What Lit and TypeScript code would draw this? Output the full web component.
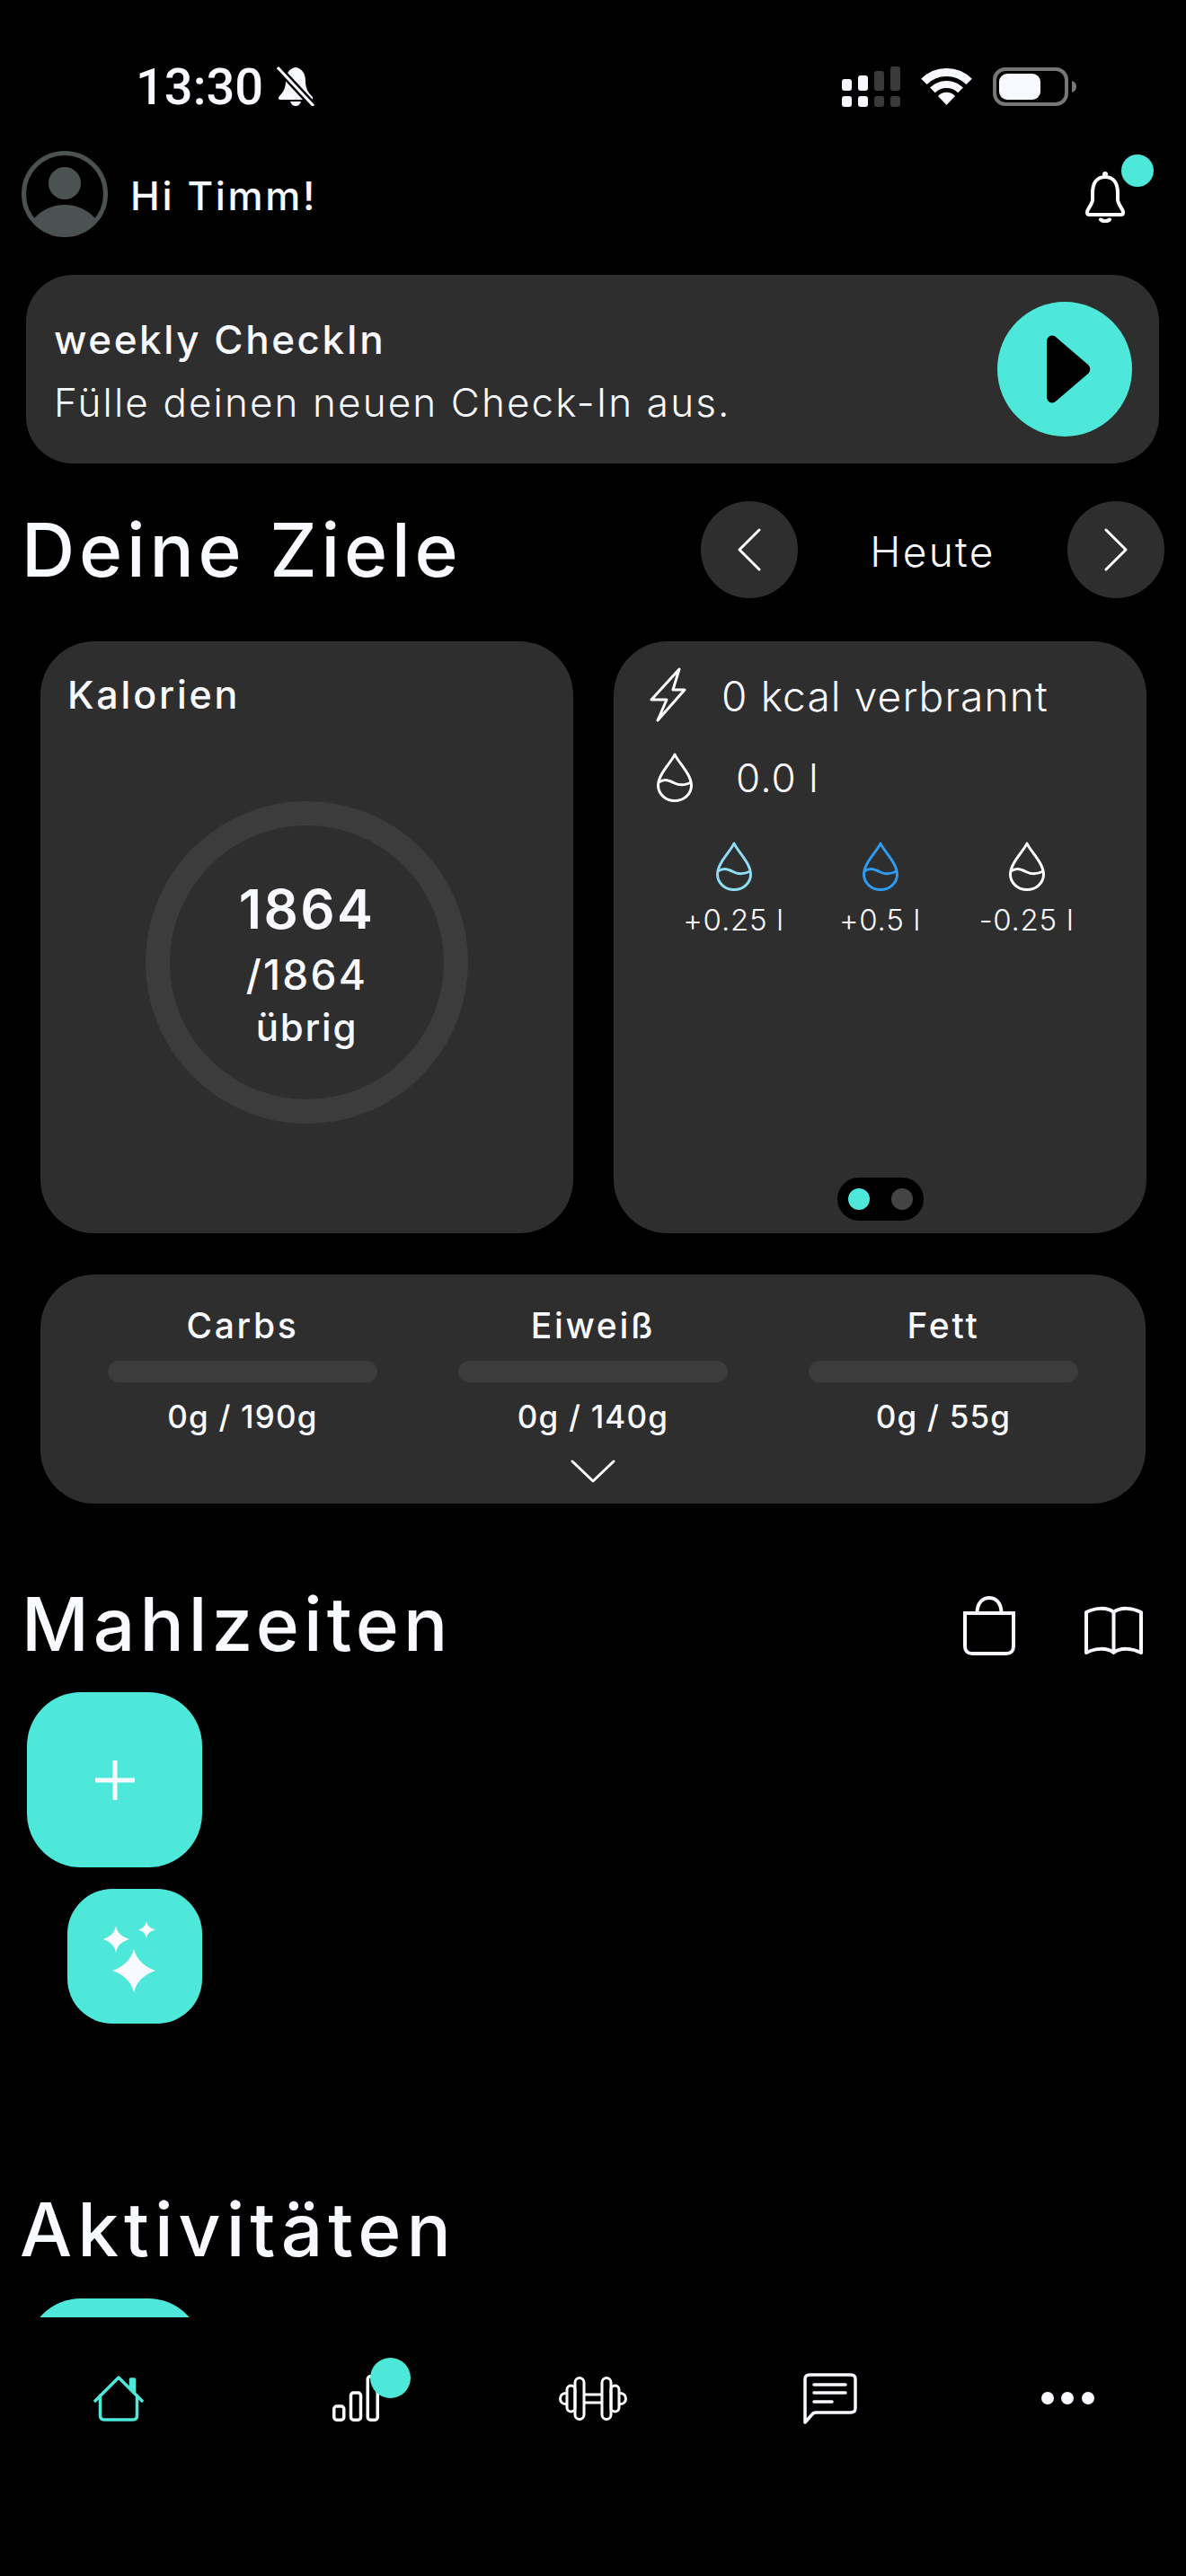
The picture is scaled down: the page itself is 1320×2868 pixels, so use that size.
// ─────────────────────────────────────────────────────────────────────────────
// app-root — Dashboard "Deine Ziele" (fitness app, dark theme)
// ─────────────────────────────────────────────────────────────────────────────

import { LitElement, html, css, svg } from "lit";
import { customElement } from "lit/decorators.js";

// ─── Icons ───────────────────────────────────────────────────────────────────
const drop = (color: string, cls = "drop") => html`
  <svg class=${cls} viewBox="0 0 42 55" fill="none" stroke=${color} stroke-width="3" stroke-linejoin="round">
    <path d="M21 2C17 11 2.500 24 2.500 36.500A18.500 17 0 0 0 39.500 36.500C39.500 24 25 11 21 2Z" />
    <path d="M3 33C10 28.500 15 31 21 34C27 37 32 36.500 39 33" />
  </svg>
`;

const mutedBell = html`
  <svg class="muted" viewBox="0 0 42 44">
    <path fill="#f8f9fe" d="M21 1C14 2 10 8 10 16c0 7-2 12-7 17c-2 2-1 4 1 4h34c2 0 3-2 1-4c-5-5-7-10-7-17c0-8-4-14-11-15z" />
    <path fill="#f8f9fe" d="M15 39h12c-1 3-3 5-6 5s-5-2-6-5z" />
    <path stroke="#000" stroke-width="8" d="M1 1L41 44" />
    <path stroke="#f8f9fe" stroke-width="3" d="M1 1L41 44" />
  </svg>
`;

const signalBars = [
  [0, 15, 13, "#f8f9fe"],
  [18, 11, 17, "#f8f9fe"],
  [36, 6, 22, "#3a3a3a"],
  [54, 1, 27, "#3a3a3a"],
] as const;

const signal = html`
  <svg class="signal" viewBox="0 0 65 46">
    ${signalBars.map(
      ([x, y, h, c]) => svg`
        <rect x=${x} y=${y} width="11" height=${h} rx="3" fill=${c} />
        <rect x=${x} y="34" width="11" height="12" rx="3" fill=${c} />
      `,
    )}
  </svg>
`;

const wifi = html`
  <svg class="wifi" viewBox="0 0 57 42" fill="none" stroke="#f8f9fe">
    <path stroke-width="9" d="M3.400 15.900A35.500 35.500 0 0 1 53.600 15.900" />
    <path stroke-width="8" d="M12.900 25.400A22 22 0 0 1 44.100 25.400" />
    <path stroke="none" fill="#f8f9fe" d="M28.500 42L19 32A13 13 0 0 1 38 32Z" />
  </svg>
`;

const battery = html`
  <svg class="battery" viewBox="0 0 93 43">
    <rect x="2" y="2" width="80" height="39" rx="12" fill="none" stroke="#777" stroke-width="4" />
    <rect x="7" y="7" width="46" height="29" rx="9" fill="#f8f9fe" />
    <path fill="#777" d="M88 15c3 1 5 3 5 6.500s-2 5.500-5 6.500z" />
  </svg>
`;

const avatar = html`
  <svg class="avatar" viewBox="0 0 96 96" fill="#4c5152">
    <circle cx="48" cy="48" r="45.500" fill="none" stroke="#4c5152" stroke-width="5" />
    <circle cx="48" cy="36" r="18" />
    <path d="M13 76C22 66 34 60 48 60C62 60 74 66 83 76A45 45 0 0 1 13 76Z" />
  </svg>
`;

const bell = html`
  <svg class="bell" viewBox="0 0 44 58" fill="none" stroke="#fff" stroke-width="4" stroke-linejoin="round" stroke-linecap="round">
    <path d="M22 7C12 7 8 15 8 25V32C8 38 2 42 2 46.500C2 48 3 49 4.500 49H39.500C41 49 42 48 42 46.500C42 42 36 38 36 32V25C36 15 32 7 22 7Z" />
    <circle cx="22" cy="4" r="3" fill="#fff" stroke="none" />
    <path d="M17 54.500q5 3.500 10 0" />
  </svg>
`;

const chevron = (d: string) => html`
  <svg class="chev" viewBox="0 0 26 48" fill="none" stroke="#fff" stroke-width="3" stroke-linecap="round" stroke-linejoin="round">
    <path d=${d} />
  </svg>
`;

const bag = html`
  <svg class="bag" viewBox="0 0 58 66" fill="none" stroke="#f8f9fe" stroke-width="4">
    <path d="M2 19H56V56C56 61 53 64 48 64H10C5 64 2 61 2 56Z" />
    <path d="M15.500 19C15.500 7 22 2 29 2C36 2 42.500 7 42.500 19" />
  </svg>
`;

const book = html`
  <svg class="book" viewBox="0 0 65 54" fill="none" stroke="#f8f9fe" stroke-width="4" stroke-linejoin="round">
    <path d="M32.500 7C25 1 12 2 2 7V52C12 47 25 46 32.500 52C40 46 53 47 63 52V7C53 2 40 1 32.500 7Z" />
    <path d="M32.500 7V52" />
  </svg>
`;

const sparkles = html`
  <svg class="sparkles" viewBox="0 0 60 80" fill="#f9faff">
    <path d="M34 32C37 44 46 52 58 56C46 60 37 68 34 80C31 68 22 60 10 56C22 52 31 44 34 32Z" />
    <path d="M14 6C15.500 14 20 18 29 21C20 24 15.500 28 14 36C12.500 28 8 24 0 21C8 18 12.500 14 14 6Z" />
    <path d="M48 1C48.800 6 52 9 58 10.500C52 12 48.800 15 48 20C47.200 15 44 12 39 10.500C44 9 47.200 6 48 1Z" />
  </svg>
`;

const home = html`
  <svg class="home" viewBox="0 0 56 51" fill="none" stroke="#4de8d9" stroke-width="3.500" stroke-linejoin="round" stroke-linecap="round">
    <path d="M2 28L28 2L54 28" />
    <path d="M7.500 22V44C7.500 47.500 9 49 12 49H44C47 49 48.500 47.500 48.500 44V22" />
    <path d="M41.500 14V4H45.500V18" fill="#4de8d9" />
  </svg>
`;

const bars = html`
  <svg class="bars" viewBox="0 0 52 52" fill="none" stroke="#fff" stroke-width="3.500">
    <rect x="1.750" y="35" width="11" height="15.250" rx="3" />
    <rect x="20.500" y="20" width="11" height="30.250" rx="3" />
    <rect x="39.250" y="1.750" width="11" height="48.500" rx="3" />
  </svg>
`;

const dumbbell = html`
  <svg class="dumbbell" viewBox="0 0 76 49" fill="none" stroke="#fff" stroke-width="3">
    <rect x="18" y="1.500" width="10" height="46" rx="5" />
    <rect x="48" y="1.500" width="10" height="46" rx="5" />
    <rect x="9" y="10" width="9" height="29" rx="4.500" />
    <rect x="58" y="10" width="9" height="29" rx="4.500" />
    <path d="M9 18.500C4 18 1.500 21 1.500 24.500C1.500 28 4 31 9 30.500" />
    <path d="M67 18.500C72 18 74.500 21 74.500 24.500C74.500 28 72 31 67 30.500" />
    <path d="M28 20H48M28 29H48" />
  </svg>
`;

const chat = html`
  <svg class="chat" viewBox="0 0 60 57" fill="none" stroke="#f9faff" stroke-width="3.500" stroke-linecap="round" stroke-linejoin="round">
    <path d="M2 55V7C2 3.500 3.500 2 7 2H53C56.500 2 58 3.500 58 7V39C58 42.500 56.500 44 53 44H14C12 44 10.500 45 9.500 46.500Z" />
    <path d="M12 13H47M12 22H47M12 32H32" />
  </svg>
`;

// ─── Data ────────────────────────────────────────────────────────────────────
const quickDrinks = [
  { label: "+0.25 l", color: "#8fdcf5" },
  { label: "+0.5 l", color: "#2f9bf0" },
  { label: "-0.25 l", color: "#ffffff" },
];

const macros = [
  { label: "Carbs", value: "0g / 190g" },
  { label: "Eiweiß", value: "0g / 140g" },
  { label: "Fett", value: "0g / 55g" },
];

@customElement("app-root")
export class AppRoot extends LitElement {
  // ─── Styles ────────────────────────────────────────────────────────────────
  static styles = css`
    :host {
      display: flex;
      flex-direction: column;
      width: 1320px;
      height: 2868px;
      background: #000;
      color: #f9faff;
      font-family: "Inter", "Noto Sans", sans-serif;
      overflow: hidden;
    }

    svg {
      display: block;
      flex: none;
    }

    /* status bar */
    .status {
      display: flex;
      align-items: center;
      height: 46px;
      margin: 73px 0 49px;
      padding-left: 151px;
    }
    .time {
      padding-top: 2px;
      font-family: "Roboto", sans-serif;
      font-size: 56px;
      font-weight: 500;
      line-height: 46px;
    }
    .muted {
      width: 42px;
      height: 44px;
      margin-left: 15px;
    }
    .status-right {
      display: flex;
      align-items: center;
      margin-left: auto;
      margin-right: 122px;
    }
    .signal {
      width: 65px;
      height: 46px;
    }
    .wifi {
      width: 57px;
      height: 42px;
      margin-left: 23px;
    }
    .battery {
      width: 93px;
      height: 43px;
      margin-left: 23px;
    }

    /* top row */
    .top {
      display: flex;
      align-items: center;
      height: 96px;
      padding: 0 68px 0 24px;
    }
    .avatar {
      width: 96px;
      height: 96px;
    }
    .hello {
      margin-left: 25px;
      padding-top: 3px;
      font-size: 44px;
      font-weight: 500;
      letter-spacing: 0.06em;
    }
    .bell-wrap {
      position: relative;
      margin-left: auto;
      padding-top: 5px;
    }
    .bell {
      width: 44px;
      height: 58px;
    }
    .badge {
      position: absolute;
      width: 36px;
      height: 36px;
      border-radius: 50%;
      background: #4de8d9;
    }
    .bell-wrap .badge {
      top: -13px;
      left: 40px;
    }

    /* check-in banner */
    .banner {
      display: flex;
      align-items: center;
      justify-content: space-between;
      height: 210px;
      margin: 42px 30px 0 29px;
      padding: 0 30px 0 31px;
      border-radius: 52px;
      background: #2e2e2e;
    }
    .banner-text {
      padding-top: 3px;
    }
    .banner-title {
      font-size: 44px;
      font-weight: 500;
      line-height: 56px;
      letter-spacing: 0.058em;
    }
    .banner-sub {
      margin-top: 14px;
      font-size: 44px;
      font-weight: 300;
      line-height: 56px;
      letter-spacing: 0.048em;
    }
    .play {
      display: flex;
      align-items: center;
      justify-content: center;
      width: 150px;
      height: 150px;
      border-radius: 50%;
      background: #4de8d9;
    }
    .play svg {
      width: 50px;
      height: 76px;
      margin-left: 8px;
    }

    /* section headings */
    .heading {
      display: flex;
      align-items: center;
      box-sizing: border-box;
      height: 108px;
      font-size: 82px;
      font-weight: 500;
      letter-spacing: 4.8px;
    }

    .goals-head {
      margin-top: 42px;
      padding: 0 24px 0 24px;
    }
    .day-nav {
      display: flex;
      align-items: center;
      margin-left: auto;
      letter-spacing: 0;
    }
    .day-btn {
      display: flex;
      align-items: center;
      justify-content: center;
      width: 108px;
      height: 108px;
      border-radius: 50%;
      background: #2e2e2e;
    }
    .chev {
      width: 26px;
      height: 48px;
    }
    .day-label {
      width: 300px;
      padding-top: 3px;
      text-align: center;
      font-size: 46px;
      font-weight: 300;
      letter-spacing: 0.05em;
    }

    /* cards */
    .cards {
      display: grid;
      grid-template-columns: 593px 593px;
      gap: 45px;
      height: 659px;
      margin-top: 48px;
      padding: 0 45px;
    }
    .card {
      display: flex;
      flex-direction: column;
      border-radius: 60px;
      background: #2e2e2e;
    }
    .kcal-title {
      margin: 30px 0 0 30px;
      font-size: 43px;
      font-weight: 500;
      line-height: 58px;
      letter-spacing: 0.065em;
    }
    .ring {
      display: flex;
      flex-direction: column;
      align-items: center;
      box-sizing: border-box;
      width: 359px;
      height: 359px;
      margin: 90px auto 0;
      padding-top: 55px;
      border: 27px solid #3c3c3c;
      border-radius: 50%;
    }
    .ring-big {
      font-size: 60px;
      font-weight: 600;
      line-height: 76px;
      letter-spacing: 0.04em;
    }
    .ring-mid {
      margin-top: -2px;
      font-size: 46px;
      font-weight: 500;
      line-height: 74px;
      letter-spacing: 0.05em;
    }
    .ring-small {
      font-size: 42px;
      font-weight: 500;
      line-height: 44px;
      letter-spacing: 0.043em;
    }

    .stats {
      padding: 29px 0 14px;
    }
    .stat-row {
      display: flex;
      align-items: center;
      padding-left: 40px;
      font-weight: 300;
      letter-spacing: 0.025em;
    }
    .bolt {
      width: 41px;
      height: 61px;
      margin-right: 39px;
    }
    .drop {
      width: 42px;
      height: 55px;
    }
    .kcal-text {
      font-size: 46px;
    }
    .kcal-text span {
      padding-top: 2px;
    }
    .water {
      margin-top: 34px;
      padding-left: 47px;
      font-size: 44px;
    }
    .water span {
      margin-left: 47px;
    }
    .quick {
      display: grid;
      grid-template-columns: repeat(3, 163px);
      margin: 44px 0 0 52px;
    }
    .quick-item {
      display: flex;
      flex-direction: column;
      align-items: center;
      gap: 12px;
      font-size: 33px;
      font-weight: 300;
      line-height: 40px;
      letter-spacing: 0.022em;
    }
    .pager {
      display: flex;
      align-items: center;
      justify-content: space-between;
      box-sizing: border-box;
      width: 96px;
      height: 48px;
      margin: auto auto 0;
      padding: 0 12px;
      border-radius: 24px;
      background: #000;
    }
    .pager i {
      width: 24px;
      height: 24px;
      border-radius: 50%;
      background: #444;
    }
    .pager i.on {
      background: #4de8d9;
    }

    /* macro card */
    .macros {
      display: flex;
      flex-direction: column;
      align-items: center;
      box-sizing: border-box;
      height: 255px;
      margin: 46px 45px 0;
      padding: 36px 30px 0;
      border-radius: 60px;
      background: #2e2e2e;
    }
    .macro-grid {
      display: grid;
      grid-template-columns: repeat(3, 390px);
    }
    .macro {
      display: flex;
      flex-direction: column;
      align-items: center;
    }
    .macro-label {
      font-size: 39px;
      font-weight: 500;
      line-height: 42px;
      letter-spacing: 0.07em;
    }
    .macro-bar {
      width: 300px;
      height: 24px;
      margin: 18px 0;
      border-radius: 12px;
      background: #3c3c3c;
    }
    .macro-value {
      font-size: 35px;
      font-weight: 500;
      line-height: 40px;
      letter-spacing: 0.034em;
    }
    .down {
      width: 50px;
      height: 26px;
      margin-top: 28px;
    }

    /* clipped feed */
    .feed {
      flex: none;
      height: 906px;
      overflow: hidden;
    }
    .meals-head {
      margin-top: 82px;
      padding: 0 48px 3px 24px;
      letter-spacing: 5px;
    }
    .head-icons {
      display: flex;
      align-items: center;
      gap: 77px;
      margin-left: auto;
      padding-top: 3px;
    }
    .bag {
      width: 58px;
      height: 66px;
    }
    .book {
      width: 65px;
      height: 54px;
      margin-top: 10px;
    }
    .add {
      display: flex;
      align-items: center;
      justify-content: center;
      width: 195px;
      height: 195px;
      margin: 20px 0 0 30px;
      border-radius: 60px;
      background: #4de8d9;
    }
    .add svg {
      width: 44px;
      height: 44px;
    }
    .ai {
      display: flex;
      align-items: center;
      justify-content: center;
      width: 150px;
      height: 150px;
      margin: 24px 0 0 75px;
      border-radius: 50px;
      background: #4de8d9;
    }
    .sparkles {
      width: 60px;
      height: 80px;
      margin-right: 10px;
    }
    .activities-head {
      margin-top: 177px;
      padding: 0 0 3px 22px;
      letter-spacing: 6px;
    }
    .activities-add {
      margin-top: 21px;
    }

    /* tab bar */
    .tabs {
      display: flex;
      align-items: center;
      height: 180px;
    }
    .tab {
      position: relative;
      display: flex;
      justify-content: center;
      width: 264px;
    }
    .home {
      width: 56px;
      height: 51px;
    }
    .bars {
      width: 52px;
      height: 52px;
    }
    .tab .badge {
      top: -19px;
      left: 148px;
      width: 45px;
      height: 45px;
    }
    .dumbbell {
      width: 76px;
      height: 49px;
    }
    .chat {
      width: 60px;
      height: 57px;
    }
    .more {
      display: flex;
      gap: 8.500px;
    }
    .more i {
      width: 14px;
      height: 14px;
      border-radius: 50%;
      background: #f9faff;
    }
  `;

  // ─── Template ──────────────────────────────────────────────────────────────
  render() {
    return html`
      <div class="status">
        <span class="time">13:30</span>
        ${mutedBell}
        <div class="status-right">${signal}${wifi}${battery}</div>
      </div>

      <div class="top">
        ${avatar}
        <span class="hello">Hi Timm!</span>
        <div class="bell-wrap">${bell}<span class="badge"></span></div>
      </div>

      <div class="banner">
        <div class="banner-text">
          <div class="banner-title">weekly CheckIn</div>
          <div class="banner-sub">Fülle deinen neuen Check-In aus.</div>
        </div>
        <div class="play">
          <svg viewBox="0 0 50 76"><path d="M1 8C1 1 7-2 12 3L47 33C50 36 50 40 47 43L12 73C7 78 1 75 1 68Z" fill="#000" /></svg>
        </div>
      </div>

      <div class="heading goals-head">
        <span>Deine Ziele</span>
        <div class="day-nav">
          <div class="day-btn">${chevron("M24 2L2 24L24 46")}</div>
          <span class="day-label">Heute</span>
          <div class="day-btn">${chevron("M2 2L24 24L2 46")}</div>
        </div>
      </div>

      <div class="cards">
        <div class="card">
          <div class="kcal-title">Kalorien</div>
          <div class="ring">
            <span class="ring-big">1864</span>
            <span class="ring-mid">/1864</span>
            <span class="ring-small">übrig</span>
          </div>
        </div>
        <div class="card stats">
          <div class="stat-row kcal-text">
            <svg class="bolt" viewBox="0 0 41 61" fill="none" stroke="#fff" stroke-width="3" stroke-linejoin="round">
              <path d="M33 2L2 36H19L9 59L39 25H26Z" />
            </svg>
            <span>0 kcal verbrannt</span>
          </div>
          <div class="stat-row water">
            ${drop("#ffffff")}
            <span>0.0 l</span>
          </div>
          <div class="quick">
            ${quickDrinks.map(
              (d) => html`<div class="quick-item">${drop(d.color)}<span>${d.label}</span></div>`,
            )}
          </div>
          <div class="pager"><i class="on"></i><i></i></div>
        </div>
      </div>

      <div class="macros">
        <div class="macro-grid">
          ${macros.map(
            (m) => html`
              <div class="macro">
                <span class="macro-label">${m.label}</span>
                <div class="macro-bar"></div>
                <span class="macro-value">${m.value}</span>
              </div>
            `,
          )}
        </div>
        <svg class="down" viewBox="0 0 50 26" fill="none" stroke="#fff" stroke-width="3" stroke-linecap="round" stroke-linejoin="round">
          <path d="M2 2L25 24L48 2" />
        </svg>
      </div>

      <div class="feed">
        <div class="heading meals-head">
          <span>Mahlzeiten</span>
          <div class="head-icons">${bag}${book}</div>
        </div>
        <div class="add">
          <svg viewBox="0 0 44 44" fill="none" stroke="#f9faff" stroke-width="5"><path d="M22 0V44M0 22H44" /></svg>
        </div>
        <div class="ai">${sparkles}</div>

        <div class="heading activities-head"><span>Aktivitäten</span></div>
        <div class="add activities-add"></div>
      </div>

      <div class="tabs">
        <div class="tab">${home}</div>
        <div class="tab">${bars}<span class="badge"></span></div>
        <div class="tab">${dumbbell}</div>
        <div class="tab">${chat}</div>
        <div class="tab"><div class="more"><i></i><i></i><i></i></div></div>
      </div>
    `;
  }
}
